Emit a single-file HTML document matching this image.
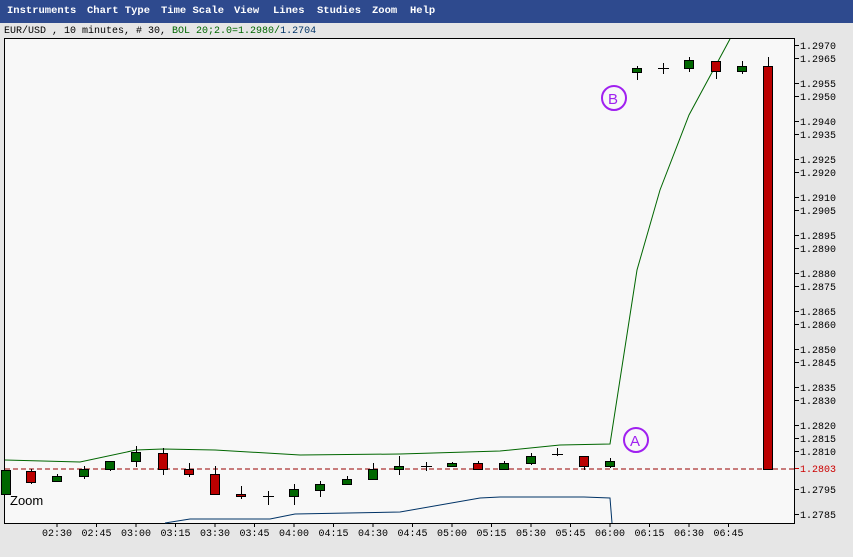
<!DOCTYPE html><html><head><style>
body{margin:0;width:853px;height:557px;background:#e6e6e6;overflow:hidden;font-family:"Liberation Mono","Noto Sans CJK SC",monospace;position:relative}
#menu{position:absolute;left:0;top:0;width:853px;height:23px;background:#2e4a8e;color:#fff;font-size:10.5px;font-weight:bold;line-height:23px}
#menu span{position:absolute;top:0}
#title{position:absolute;left:4px;top:26px;font-size:10px;color:#000;white-space:pre}
</style></head><body>
<div id="menu"><span style="left:7px">Instruments</span><span style="left:87px">Chart Type</span><span style="left:161px">Time Scale</span><span style="left:234px">View</span><span style="left:273px">Lines</span><span style="left:317px">Studies</span><span style="left:372px">Zoom</span><span style="left:410px">Help</span></div>
<div id="title">EUR/USD , 10 minutes, # 30, <span style="color:#060">BOL 20;2.0=1.2980/</span><span style="color:#036">1.2704</span></div>
<svg width="853" height="557" style="position:absolute;left:0;top:0" font-family="Liberation Mono, monospace" font-size="10">
<rect x="4.5" y="38.5" width="790" height="485" fill="#f8f8f8" stroke="#000"/>
<line x1="5" y1="469" x2="794" y2="469" stroke="#900" stroke-dasharray="5,3"/>
<polyline fill="none" stroke="#060" points="5,460 80,462 136,450 163,449 215,450 300,455 400,454 500,451 560,445 610,444 637,270 660,190 689,115 716,65 730,39"/>
<polyline fill="none" stroke="#036" points="165,523 190,519 270,519 295,514 400,512 480,498 500,497 584,497 610,498 612,523"/>
<g id="c" stroke="#000"></g>
<text x="10" y="505" font-family="Liberation Sans, sans-serif" font-size="13">Zoom</text>
<g fill="none" stroke="#a020f0" stroke-width="2"><circle cx="614" cy="98" r="12"/><circle cx="636" cy="440" r="12"/></g>
<text x="608" y="104" fill="#a020f0" font-size="15" font-family="Liberation Sans">B</text>
<text x="630" y="446" fill="#a020f0" font-size="15" font-family="Liberation Sans">A</text>
<g id="ax"></g>
<g id="tx"></g>
</svg>
<script>
var C=[[6,470,494,470,494,'g'],[31,469,484,471,482,'r'],[57,474,482,476,481,'g'],[84,466,479,469,476,'g'],[110,461,471,461,469,'g'],[136,446,467,452,461,'g'],[163,448,475,453,469,'r'],[189,463,477,469,474,'r'],[215,466,494,474,494,'r'],[241,486,499,494,496,'r'],[268,491,505,496,496,'x'],[294,484,505,489,496,'g'],[320,481,497,484,490,'g'],[347,476,484,479,484,'g'],[373,463,479,469,479,'g'],[399,456,475,466,469,'g'],[426,462,471,466,466,'x'],[452,462,466,463,466,'g'],[478,461,470,463,469,'r'],[504,461,470,463,469,'g'],[531,453,465,456,463,'g'],[557,448,456,454,454,'x'],[584,456,470,456,466,'r'],[610,458,468,461,466,'g'],[637,66,80,68,72,'g'],[663,63,74,68,68,'x'],[689,57,72,60,68,'g'],[716,61,79,61,71,'r'],[742,61,74,66,71,'g'],[768,57,469,66,469,'r']];
var s='';C.forEach(function(c){var x=c[0];s+='<line x1="'+(x+.5)+'" y1="'+c[1]+'" x2="'+(x+.5)+'" y2="'+c[2]+'"/>';
if(c[5]=='x')s+='<line x1="'+(x-5)+'" y1="'+(c[3]+.5)+'" x2="'+(x+6)+'" y2="'+(c[3]+.5)+'"/>';
else s+='<rect x="'+(x-4.5)+'" y="'+(c[3]+.5)+'" width="9" height="'+(c[4]-c[3])+'" fill="'+(c[5]=='g'?'#060':'#b00')+'"/>';});
document.getElementById('c').innerHTML=s;
var L=['2970','2965','2955','2950','2940','2935','2925','2920','2910','2905','2895','2890','2880','2875','2865','2860','2850','2845','2835','2830','2820','2815','2810','2803','2795','2785'];
var a='';L.forEach(function(l){var y=Math.round(45+(2970-+l)*2.5351);var col=l=='2803'?'#c00':'#000';
a+='<line x1="795" y1="'+(y+.5)+'" x2="799" y2="'+(y+.5)+'" stroke="'+col+'"/><text x="800" y="'+(y+4)+'" fill="'+col+'">1.'+l+'</text>';});
document.getElementById('ax').innerHTML=a;
var T=['02:30','02:45','03:00','03:15','03:30','03:45','04:00','04:15','04:30','04:45','05:00','05:15','05:30','05:45','06:00','06:15','06:30','06:45'];
var t='';T.forEach(function(l,i){var x=57+i*39.5;t+='<line x1="'+x+'" y1="524" x2="'+x+'" y2="527" stroke="#000"/><text x="'+x+'" y="536" text-anchor="middle">'+l+'</text>';});
document.getElementById('tx').innerHTML=t;
</script>
</body></html>
